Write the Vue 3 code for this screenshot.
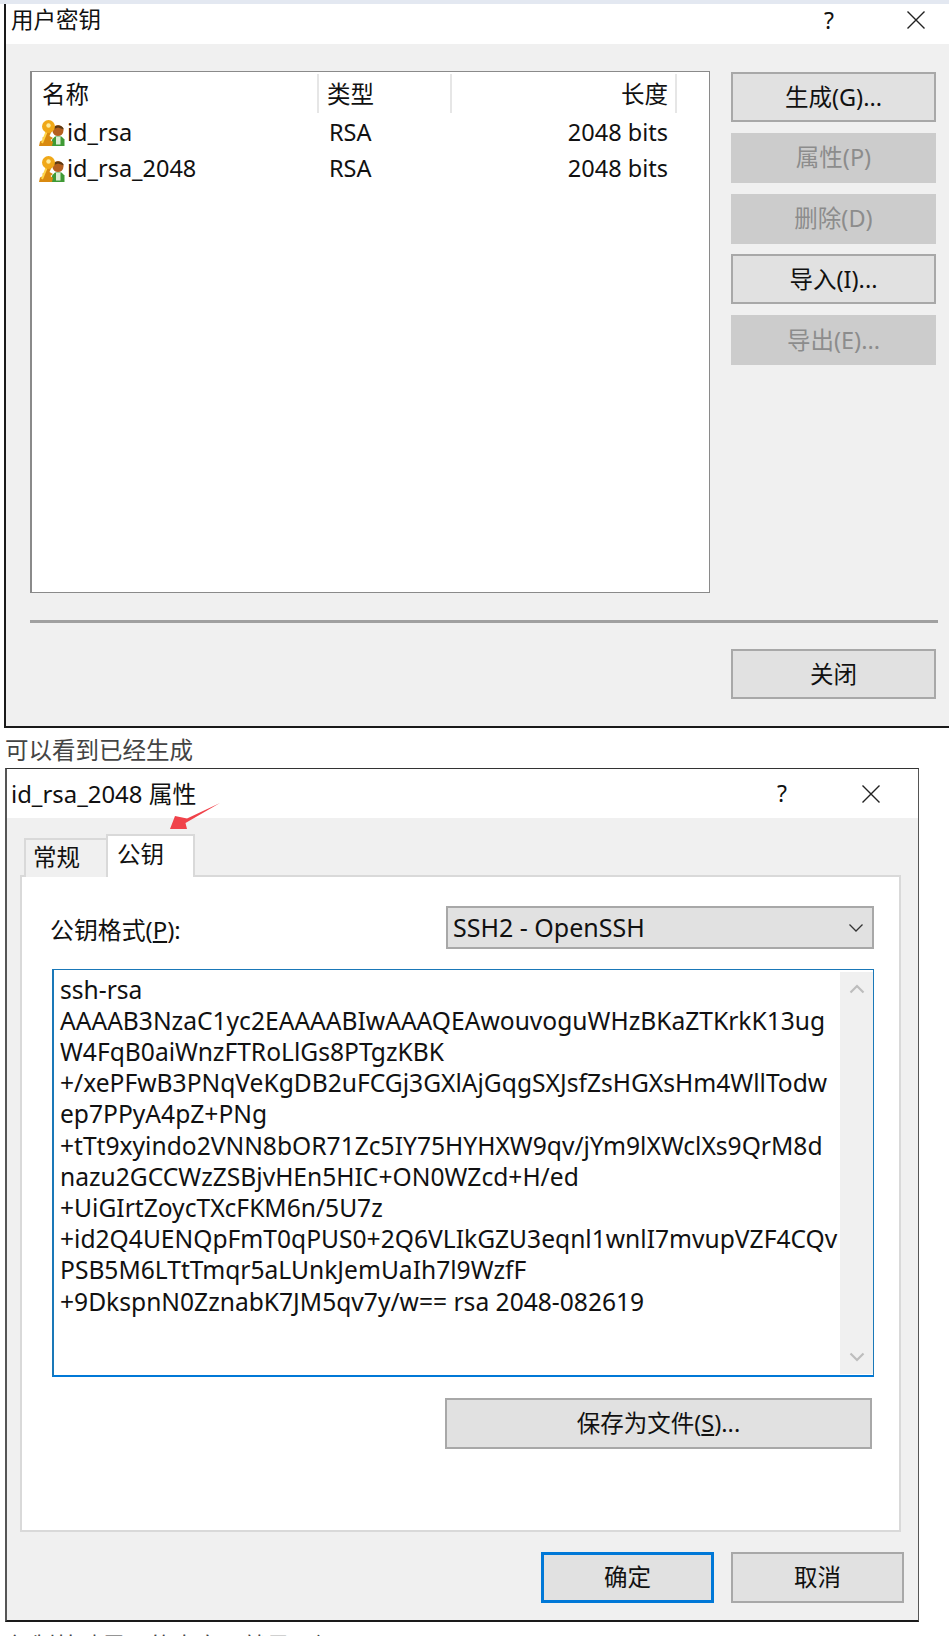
<script setup>
const keys = [
  { name: 'id_rsa', type: 'RSA', len: '2048 bits' },
  { name: 'id_rsa_2048', type: 'RSA', len: '2048 bits' }
]
const actions = [
  { label: '生成(G)...', off: false },
  { label: '属性(P)', off: true },
  { label: '删除(D)', off: true },
  { label: '导入(I)...', off: false },
  { label: '导出(E)...', off: true }
]
const lines = [
  'ssh-rsa',
  'AAAAB3NzaC1yc2EAAAABIwAAAQEAwouvoguWHzBKaZTKrkK13ug',
  'W4FqB0aiWnzFTRoLlGs8PTgzKBK',
  '+/xePFwB3PNqVeKgDB2uFCGj3GXlAjGqgSXJsfZsHGXsHm4WllTodw',
  'ep7PPyA4pZ+PNg',
  '+tTt9xyindo2VNN8bOR71Zc5IY75HYHXW9qv/jYm9lXWclXs9QrM8d',
  'nazu2GCCWzZSBjvHEn5HIC+ON0WZcd+H/ed',
  '+UiGIrtZoycTXcFKM6n/5U7z',
  '+id2Q4UENQpFmT0qPUS0+2Q6VLIkGZU3eqnl1wnlI7mvupVZF4CQv',
  'PSB5M6LTtTmqr5aLUnkJemUaIh7l9WzfF',
  '+9DkspnN0ZznabK7JM5qv7y/w== rsa 2048-082619'
]
</script>

<template>
  <div class="page">
    <div class="strip"></div>

    <section class="dlg1">
      <header class="bar bar1">
        <span class="title title1">用户密钥</span>
        <span class="q">?</span>
        <svg class="x x1" width="24" height="24" viewBox="0 0 24 24"><path d="M3.5 3.5 20.5 20.5M20.5 3.5 3.5 20.5" stroke="#222" stroke-width="1.4" fill="none"/></svg>
      </header>
      <div class="body1">
        <div class="top">
          <div class="list">
            <div class="grid head">
              <div class="hc c1"><span>名称</span></div>
              <div class="hc c2"><span>类型</span></div>
              <div class="hc c3"><span>长度</span></div>
            </div>
            <div v-for="k in keys" :key="k.name" class="grid row">
              <div class="c1 name">
                <svg class="ico" width="26" height="26" viewBox="0 0 26 26">
                  <path d="M13 26V19.500L16 16.500H22.500L25.500 19.500V26Z" fill="#3f9a35"/>
                  <path d="M17 17H21.500V24.500H17Z" fill="#dcedd2"/>
                  <circle cx="19" cy="10.500" r="5.500" fill="#b5601f"/>
                  <path d="M13.500 9.500C14.500 4.500 23.500 4 25 9.500L19 7.500Z" fill="#5c3a14"/>
                  <path d="M7 9 13 10.500 10.500 16 14 18 11.500 20 14 22 13 26H0L1 21.500 4 20 3.500 17.500 6 16.500Z" fill="#d98a10"/>
                  <path d="M7.500 12 3 23" stroke="#ffd54a" stroke-width="2"/>
                  <circle cx="9.500" cy="6.500" r="6.500" fill="#f0a818"/>
                  <circle cx="9.500" cy="5.500" r="2.200" fill="#ffeb9c"/>
                </svg>
                <span>{{ k.name }}</span>
              </div>
              <div class="c2 cell">{{ k.type }}</div>
              <div class="c3 cell">{{ k.len }}</div>
            </div>
          </div>
          <div class="actions">
            <button v-for="a in actions" :key="a.label" class="btn act" :class="{ off: a.off }">{{ a.label }}</button>
          </div>
        </div>
        <div class="sep"></div>
        <div class="foot1">
          <button class="btn act">关闭</button>
        </div>
      </div>
    </section>

    <p class="caption cap1">可以看到已经生成</p>

    <section class="dlg2">
      <svg class="arrow" width="60" height="32" viewBox="0 0 60 32"><path d="M55 3 22 18.500 10 16 5 29 22 29 20.500 23Z" fill="#f0424a"/></svg>
      <header class="bar bar2">
        <span class="title">id_rsa_2048 属性</span>
        <span class="q">?</span>
        <svg class="x x2" width="24" height="24" viewBox="0 0 24 24"><path d="M3.500 3.500 20.500 20.500M20.500 3.500 3.500 20.500" stroke="#222" stroke-width="1.400" fill="none"/></svg>
      </header>
      <div class="body2">
        <div class="tabs">
          <div class="tab tab-a">常规</div>
          <div class="tab tab-b">公钥</div>
        </div>
        <div class="panel">
          <div class="fmt">
            <label class="lab">公钥格式(<u>P</u>):</label>
            <div class="select">
              <span>SSH2 - OpenSSH</span>
              <svg width="16" height="10" viewBox="0 0 16 10"><path d="M1.500 1.500 8 8 14.500 1.500" stroke="#333" stroke-width="1.300" fill="none"/></svg>
            </div>
          </div>
          <div class="keybox">
            <div class="keytext">
              <div v-for="(l, i) in lines" :key="i" class="kl">{{ l }}</div>
            </div>
            <div class="scroll">
              <svg width="16" height="10" viewBox="0 0 16 10"><path d="M1.500 8.500 8 2 14.500 8.500" stroke="#bdbdbd" stroke-width="2.200" fill="none"/></svg>
              <svg width="16" height="10" viewBox="0 0 16 10"><path d="M1.500 1.500 8 8 14.500 1.500" stroke="#bdbdbd" stroke-width="2.200" fill="none"/></svg>
            </div>
          </div>
          <div class="saverow">
            <button class="btn save">保存为文件(<u>S</u>)...</button>
          </div>
        </div>
        <div class="foot2">
          <button class="btn dlgbtn primary">确定</button>
          <button class="btn dlgbtn">取消</button>
        </div>
      </div>
    </section>

    <p class="caption cap2">复制粘贴里面的内容，就是公钥</p>
  </div>
</template>

<style>
html, body { margin: 0; background: #fff; }
</style>

<style scoped>
.page {
  width: 949px;
  height: 1636px;
  overflow: hidden;
  background: #fff;
  color: #111;
  font-family: "Noto Sans", "Noto Sans CJK SC", sans-serif;
  font-size: 23.500px;
}
.strip { height: 4px; background: #e3e8f1; }

.dlg1 {
  margin-left: 4px;
  height: 724px;
  box-sizing: border-box;
  border-left: 2px solid #1a1a1a;
  border-bottom: 2px solid #1a1a1a;
  display: flex;
  flex-direction: column;
}
.bar { display: flex; background: #fff; flex: none; }
.bar1 { height: 40px; padding: 0 21px 0 5px; align-items: flex-start; line-height: 32px; }
.bar2 { height: 49px; padding: 0 35px 0 4px; align-items: center; line-height: 49px; }
.title { flex: 1; white-space: nowrap; font-size: 23.900px; }
.title1 { font-size: 22.500px; }
.q { width: 24px; text-align: center; font-size: 23px; }
.x { flex: none; }
.x1 { margin-left: 63px; margin-top: 4px; }
.x2 { margin-left: 65px; }

.body1 {
  flex: 1;
  background: #f0f0f0;
  padding: 27px 11px 0 24px;
  display: flex;
  flex-direction: column;
}
.top { display: flex; gap: 21px; padding-right: 2px; }
.list {
  width: 680px;
  height: 522px;
  box-sizing: border-box;
  background: #fff;
  border: 1px solid #8a8a8a;
  border-left-width: 2px;
  padding-top: 2px;
}
.grid { display: grid; grid-template-columns: 287px 133px 225px; }
.head { height: 39px; margin-bottom: 2px; }
.hc { border-right: 2px solid #e6e6e6; display: flex; align-items: center; padding-bottom: 2px; }
.hc.c1 { padding-left: 10px; }
.hc.c2 { padding-left: 8px; }
.hc.c3 { justify-content: flex-end; padding-right: 7px; }
.row { height: 36px; align-items: center; white-space: nowrap; }
.name { display: flex; align-items: center; gap: 2px; padding-left: 7px; }
.name span { margin-top: -2px; }
.cell { margin-top: -2px; }
.ico { flex: none; }
.cell.c2 { padding-left: 10px; }
.cell.c3 { text-align: right; padding-right: 9px; }

.actions { width: 205px; margin-top: 1px; display: flex; flex-direction: column; gap: 10.75px; }
.btn {
  box-sizing: border-box;
  margin: 0;
  padding: 0 0 3px;
  background: #e1e1e1;
  border: 2px solid #a8a8a8;
  color: #111;
  font: inherit;
}
.act { width: 205px; height: 50px; }
.act.off { background: #cccccc; border-color: #cccccc; color: #8c8c8c; }

.sep { height: 3px; margin-top: 27px; background: #a0a0a0; width: 908px; }
.foot1 { display: flex; justify-content: flex-end; padding-right: 2px; margin-top: 26px; }

.caption { margin: 0; color: #444; white-space: nowrap; font-size: 23.500px; }
.cap1 { height: 40px; line-height: 44px; padding-left: 5px; }
.cap2 { line-height: 30px; padding-left: 8px; margin-top: 9px; }

.dlg2 {
  position: relative;
  margin-left: 5px;
  width: 914px;
  height: 854px;
  box-sizing: border-box;
  border-top: 1px solid #333;
  border-left: 2px solid #555;
  border-right: 1px solid #555;
  border-bottom: 2px solid #1a1a1a;
  display: flex;
  flex-direction: column;
}
.arrow { position: absolute; left: 158px; top: 31px; z-index: 2; }
.body2 {
  flex: 1;
  background: #f0f0f0;
  padding: 16px 13px 0 13px;
  display: flex;
  flex-direction: column;
}
.tabs { display: flex; align-items: flex-end; margin-left: 4px; height: 43px; margin-bottom: -2px; position: relative; z-index: 1; }
.tab { box-sizing: border-box; border: 2px solid #d9d9d9; border-bottom: 0; }
.tab-a { width: 82px; height: 39px; line-height: 34px; padding-left: 7px; background: #f0f0f0; border-right: 0; }
.tab-b { width: 89px; height: 43px; line-height: 37px; padding-left: 9px; background: #fff; }
.panel {
  width: 881px;
  height: 657px;
  box-sizing: border-box;
  background: #fff;
  border: 2px solid #d9d9d9;
  padding: 29px 25px 0 30px;
}
.fmt { display: flex; justify-content: space-between; align-items: center; height: 43px; }
.lab { margin-left: -2px; font-size: 23.900px; padding-top: 2px; }
.select {
  width: 428px;
  height: 43px;
  box-sizing: border-box;
  background: #e1e1e1;
  border: 2px solid #a8a8a8;
  display: flex;
  align-items: center;
  justify-content: space-between;
  padding: 0 8px 0 5px;
  font-size: 25px;
}
.select span { margin-top: -1px; }
.keybox {
  margin-top: 20px;
  height: 408px;
  box-sizing: border-box;
  display: flex;
  border: 1px solid #1a78b8;
  border-left-width: 2px;
  border-bottom: 2px solid #0078d7;
}
.keytext { flex: 1; padding: 3.500px 0 0 6px; font-size: 24.600px; line-height: 31.200px; white-space: nowrap; overflow: hidden; }
.scroll {
  flex: none;
  width: 33px;
  margin: 2px 0 1px;
  background: #f0f0f0;
  display: flex;
  flex-direction: column;
  justify-content: space-between;
  align-items: center;
  padding: 12px 0;
  box-sizing: border-box;
}
.saverow { display: flex; justify-content: flex-end; padding-right: 2px; margin-top: 21px; }
.save { width: 427px; height: 51px; }
.foot2 { display: flex; justify-content: flex-end; gap: 17px; margin-top: 20px; padding-right: 1px; }
.dlgbtn { width: 173px; height: 51px; }
.primary { border: 3px solid #0078d7; }
</style>
